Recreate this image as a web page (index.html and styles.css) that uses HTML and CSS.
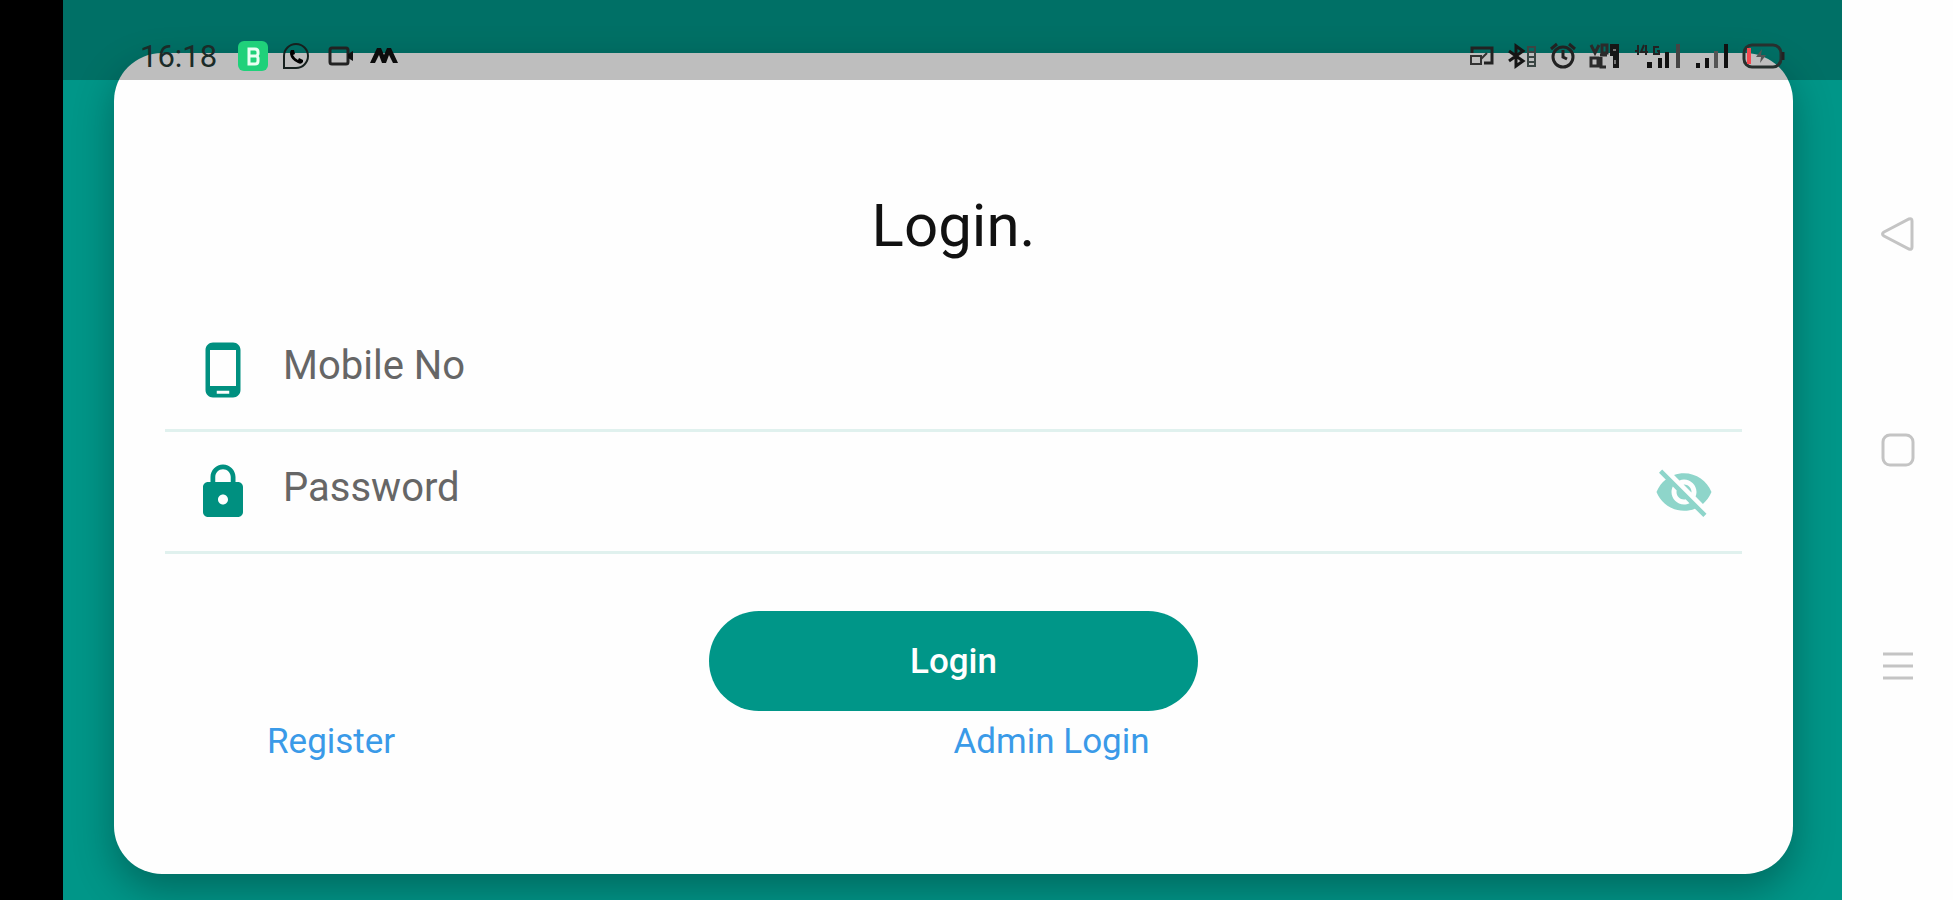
FILE: index.html
```html
<!DOCTYPE html>
<html lang="en">

<head>
    <meta charset="UTF-8">
    <meta name="viewport" content="width=device-width, initial-scale=1.0">
    <title>Login</title>
    <link rel="stylesheet" href="styles.css">
</head>

<body>
    <div class="notch"></div>

    <main class="screen">
        <!-- login card -->
        <form class="card">
            <h1 class="title">Login.</h1>

            <div class="field">
                <label for="mobile" aria-label="Mobile No">
                    <svg class="icon" viewBox="0 0 24 24">
                        <path d="M16 1H8C6.340 1 5 2.340 5 4v16c0 1.660 1.340 3 3 3h8c1.660 0 3-1.340 3-3V4c0-1.660-1.340-3-3-3zm-1.500 20.500h-5v-1.200h5v1.200zM17.200 18.400H6.800V4h10.400v14.400z" />
                    </svg>
                </label>
                <input class="input" id="mobile" type="tel" placeholder="Mobile No">
            </div>

            <div class="field">
                <label for="password" aria-label="Password">
                    <svg class="icon" viewBox="0 0 24 24">
                        <path d="M18 8h-1V6c0-2.760-2.240-5-5-5S7 3.240 7 6v2H6c-1.100 0-2 .9-2 2v10c0 1.100.9 2 2 2h12c1.100 0 2-.9 2-2V10c0-1.100-.9-2-2-2zm-6 9c-1.100 0-2-.9-2-2s.9-2 2-2 2 .9 2 2-.9 2-2 2zm3.100-9H8.900V6c0-1.710 1.390-3.100 3.100-3.100s3.100 1.390 3.100 3.100v2z" />
                    </svg>
                </label>
                <input class="input" id="password" type="password" placeholder="Password">
                <button class="eye" type="button" aria-label="Show password">
                    <svg class="icon" viewBox="0 0 24 24">
                        <path d="M12 7c2.760 0 5 2.240 5 5 0 .65-.13 1.260-.36 1.830l2.920 2.920c1.510-1.260 2.700-2.890 3.430-4.750-1.730-4.390-6-7.500-11-7.500-1.400 0-2.740.25-3.980.7l2.160 2.160C10.740 7.130 11.350 7 12 7zM2 4.270l2.280 2.280.46.46C3.080 8.300 1.780 10.020 1 12c1.730 4.390 6 7.500 11 7.500 1.550 0 3.030-.3 4.380-.84l.42.42L19.730 22 21 20.730 3.270 3 2 4.270zM7.530 9.800l1.550 1.550c-.05.21-.08.43-.08.65 0 1.660 1.340 3 3 3 .22 0 .44-.03.65-.08l1.550 1.550c-.67.33-1.410.53-2.200.53-2.760 0-5-2.240-5-5 0-.79.2-1.530.53-2.200zm4.310-.78l3.150 3.150.02-.16c0-1.660-1.340-3-3-3l-.17.01z" />
                    </svg>
                </button>
            </div>

            <button class="submit" type="submit">Login</button>

            <div class="links">
                <a class="link first" href="#register">Register</a>
                <a class="link" href="#admin">Admin Login</a>
            </div>
        </form>

        <!-- system status bar, drawn over the card -->
        <div class="status">
            <span class="time">16:18</span>
            <svg class="app" width="30" height="30" viewBox="0 0 30 30">
                <rect width="30" height="30" rx="6" fill="#1fd17a" />
                <path d="M11 8h6q3 0 3 3v2l-1 2 1 2v3q0 3-3 3h-6zM11 15h7" fill="none" stroke="#e9fff3" stroke-width="3" />
            </svg>
            <svg class="chat" width="28" height="28" viewBox="0 0 28 28">
                <path d="M2 26V14A12 12 0 1 1 14 26z" fill="none" stroke="#16201e" stroke-width="2" />
                <path d="M9 8l3 0 1 4-2 1q2 4 5 5l1-2 4 2v2q-2 3-5 1-7-3-8-9 0-3 1-4z" fill="#000" />
            </svg>
            <svg class="camera" width="26" height="22" viewBox="0 0 26 22">
                <rect x="2" y="3" width="18" height="16" rx="2" fill="none" stroke="#222" stroke-width="3" />
                <path d="M20 9l5-3v10l-5-3z" fill="#111" />
            </svg>
            <svg width="28" height="20" viewBox="0 0 28 20">
                <path d="M0 17L7 2h4l3 7 3-7h4l7 15h-5l-4-8-3 8h-4l-3-8-4 8z" fill="#0c0c0c" />
            </svg>

            <div class="system">
                <svg width="25" height="22" viewBox="0 0 25 22">
                    <path d="M3 8V3h20v15h-8" fill="none" stroke="#222" stroke-width="3" />
                    <path d="M2 11h10v8H2zM12 14l6-6" fill="none" stroke="#333" stroke-width="2" />
                </svg>
                <svg width="30" height="28" viewBox="0 0 30 28">
                    <path d="M2 9l14 10-7 5V4l7 5L2 19" fill="none" stroke="#151515" stroke-width="3" />
                    <path d="M21 5h7v19h-7zM22 10h5M22 15h5M22 20h5" fill="none" stroke="#3a4543" stroke-width="2" />
                </svg>
                <svg width="26" height="28" viewBox="0 0 26 28">
                    <circle cx="13" cy="15" r="10" fill="none" stroke="#222" stroke-width="3" />
                    <path d="M1 7l6-5M25 7l-6-5M13 8v7l4 2" fill="none" stroke="#222" stroke-width="3" />
                </svg>
                <svg width="32" height="28" viewBox="0 0 32 28">
                    <path d="M2 3l4 8 4-8M13 3h5v8h-5zM2 16h7v8H2zM12 15v10h5M11 13l7 0" fill="none" stroke="#2a2a2a" stroke-width="3" />
                    <path d="M21 2h9v24h-6V14h-3z" fill="#161616" />
                    <path d="M24 8h3M26 18v4" stroke="#777" stroke-width="2" />
                </svg>
                <svg width="48" height="28" viewBox="0 0 48 28">
                    <path d="M4 3v10M1 9h4M10 3l-3 7h7M12 3v10M25 5h-5v7h5V9h-2" fill="none" stroke="#222" stroke-width="2" />
                    <path d="M13 20h5v6h-5zM24 16h4v10h-4zM31 10h4v16h-4z" fill="#111" />
                    <path d="M42 2h4v24h-4z" fill="#444" />
                </svg>
                <svg width="34" height="28" viewBox="0 0 34 28">
                    <path d="M1 21h4v5H1zM10 16h4v10h-4zM29 2h4v24h-4z" fill="#111" />
                    <path d="M19 9h4v17h-4z" fill="#555" />
                </svg>
                <svg width="44" height="28" viewBox="0 0 44 28">
                    <rect x="2" y="3" width="37" height="22" rx="8" fill="none" stroke="#27302e" stroke-width="3" />
                    <path d="M41 10v8" stroke="#222" stroke-width="3" />
                    <path d="M5 6h4v16H5z" fill="#f4484f" />
                    <path d="M20 7l-6 8h5l-1 6 6-8h-5z" fill="#555" />
                </svg>
            </div>
        </div>
    </main>

    <!-- system navigation -->
    <nav class="nav">
        <button class="key" type="button" aria-label="Back">
            <svg width="36" height="36" viewBox="0 0 36 36">
                <path d="M4 16L29 3q3-1 3 2v26q0 3-3 2L4 20q-3-2 0-4z" />
            </svg>
        </button>
        <button class="key" type="button" aria-label="Home">
            <svg width="36" height="36" viewBox="0 0 36 36">
                <rect x="3" y="3" width="30" height="30" rx="7" />
            </svg>
        </button>
        <button class="key" type="button" aria-label="Recent apps">
            <svg width="36" height="36" viewBox="0 0 36 36">
                <path d="M3 6h30M3 18h30M3 30h30" />
            </svg>
        </button>
    </nav>
</body>

</html>
```
FILE: styles.css
```css
* {
    margin: 0;
    padding: 0;
    box-sizing: border-box;
    font-family: Roboto, 'Liberation Sans', sans-serif;
}

body {
    min-height: 100vh;
    display: flex;
    background: #fefefe;
}

button {
    border: 0;
    background: none;
    cursor: pointer;
}

svg {
    display: block;
    flex-shrink: 0;
}

.notch {
    width: 63px;
    background: #000;
}

.screen {
    flex: 1;
    padding: 53px 49px 26px 51px;
    background: #009688;
    position: relative;
    display: flex;
    overflow: hidden;
}

/* card */
.card {
    flex: 1;
    padding: 138px 51px 110px;
    border-radius: 48px;
    background: #fefefe;
    box-shadow: 0 16px 40px rgba(0, 0, 0, 0.3);

    display: flex;
    flex-direction: column;
}

.title {
    margin-bottom: 49px;
    font-size: 60px;
    font-weight: 400;
    line-height: 70px;
    text-align: center;
    color: #111;
}

.field {
    height: 122px;
    padding: 0 28px;
    border-bottom: 3px solid #e0f1ee;

    display: flex;
    align-items: center;
    gap: 30px;
}

.icon {
    width: 60px;
    height: 60px;
    fill: #009080;
}

.input {
    flex: 1;
    min-width: 0;
    height: 100%;
    padding-bottom: 8px;
    border: 0;
    outline: 0;
    background: none;
    font-size: 40px;
    color: #222;
}

.input::placeholder {
    color: #666;
}

.eye .icon {
    fill: #8ed5ca;
}

.submit {
    width: 31%;
    height: 100px;
    margin: 57px auto 10px;
    border-radius: 50px;
    background: #009688;
    font-size: 35px;
    font-weight: 500;
    color: #fff;
}

.links {
    display: grid;
    grid-template-columns: 1fr 1fr;
}

.link {
    justify-self: start;
    font-size: 35px;
    line-height: 42px;
    color: #3a9ae8;
    text-decoration: none;
}

.first {
    margin-left: 102px;
}

/* status bar */
.status {
    height: 80px;
    padding: 32px 56px 0 77px;
    background: rgba(0, 0, 0, 0.25);
    position: absolute;
    top: 0;
    left: 0;
    right: 0;

    display: flex;
    align-items: center;
}

.time {
    font-size: 31px;
    font-weight: 400;
    color: #1b2b28;
}

.app {
    margin-left: 21px;
}

.chat {
    margin-left: 14px;
}

.camera {
    margin: 0 16px 0 18px;
}

.system {
    margin-left: auto;
    display: flex;
    align-items: center;
    gap: 13px;
}

/* right side keys */
.nav {
    width: 111px;
    padding: 24vh 0;
    display: flex;
    flex-direction: column;
    align-items: center;
    justify-content: space-between;
}

.key svg {
    fill: none;
    stroke: #c4c4c4;
    stroke-width: 3;
}
```
